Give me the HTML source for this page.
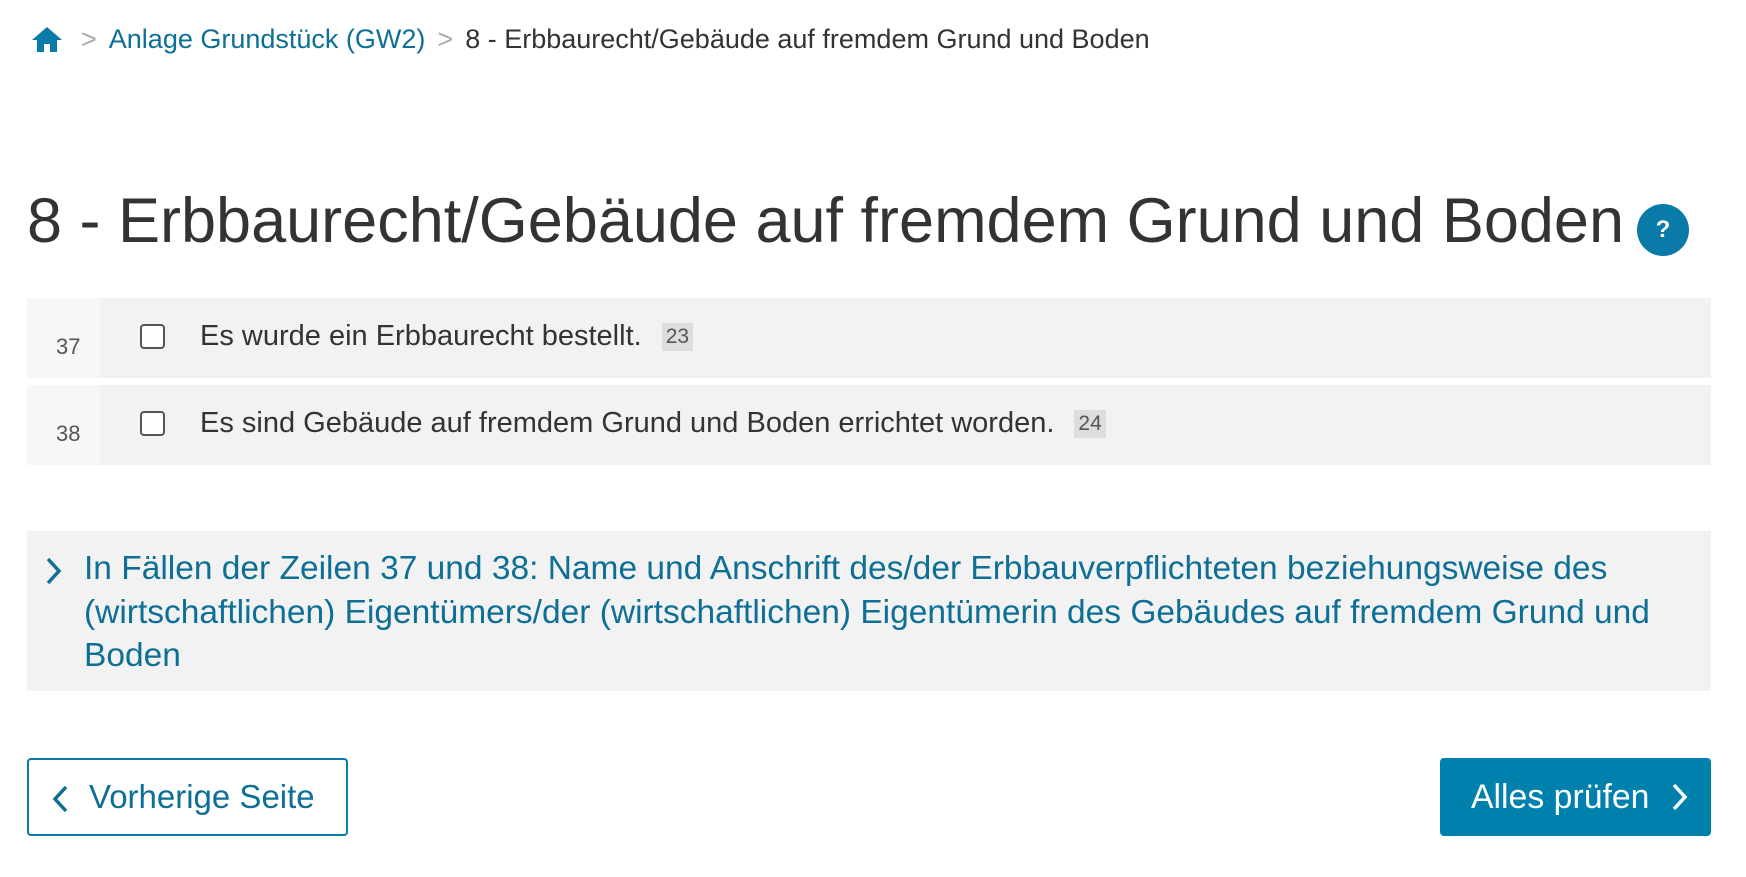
<!DOCTYPE html>
<html><head><meta charset="utf-8"><style>
*{box-sizing:border-box;margin:0;padding:0}
body{width:1746px;height:877px;background:#fff;font-family:"Liberation Sans",sans-serif;color:#333;position:relative;overflow:hidden}
.abs{position:absolute}
.bc{top:23px;left:0;height:32px;font-size:27px;display:flex;align-items:center}
.bc a{color:#0e6f96;text-decoration:none}
.chev{color:#aaa;margin:0 12px}
h1{position:absolute;left:27px;top:185px;font-size:63px;font-weight:normal;color:#333;white-space:nowrap}
.help{left:1637px;top:204px;width:52px;height:52px;border-radius:50%;background:#0a7aa8;color:#fff;font-weight:bold;font-size:24px;text-align:center;line-height:52px}
.row{left:27px;width:1684px;background:#f2f2f2;height:80px}
.num{position:absolute;left:0;top:0;width:73px;height:100%;background:#f7f7f7;font-size:22px;color:#555;padding-left:29px;padding-top:36px}
.cb{position:absolute;left:113px;top:26px;width:25px;height:25px;border:2px solid #555;border-radius:4px;background:#fff}
.lbl{position:absolute;left:173px;top:22px;font-size:29px;color:#333;white-space:nowrap}
.badge{display:inline-block;background:#ddd;font-size:21px;color:#555;padding:2px 4px;margin-left:20px;vertical-align:middle}
.acc{left:27px;top:531px;width:1684px;height:160px;background:#f2f2f2;color:#0e6f96;font-size:33.5px;line-height:43.6px;padding:16px 40px 0 57px}
.acc svg{position:absolute;left:17px;top:25px}
.btn{top:758px;height:78px;border-radius:4px;font-size:33px;display:flex;align-items:center}
.prev{left:27px;width:321px;border:2px solid #0a7aa8;color:#0e6f96;padding-left:60px}
.next{left:1440px;width:271px;background:#0080ad;color:#fff;padding-left:31px;font-size:33.8px}
</style></head><body>
<div class="abs bc">
<svg style="margin-left:31px" width="32" height="28" viewBox="0 0 32 28"><path d="M16 2 L1 15 H6 V27 H13 V19 H19 V27 H26 V15 H31 Z" fill="#0a7aa8"/></svg>
<span class="chev" style="margin-left:18px">&gt;</span><a>Anlage Grundstück (GW2)</a><span class="chev">&gt;</span><span>8 - Erbbaurecht/Gebäude auf fremdem Grund und Boden</span>
</div>
<h1>8 - Erbbaurecht/Gebäude auf fremdem Grund und Boden</h1>
<div class="abs help">?</div>
<div class="abs row" style="top:298px"><div class="num">37</div><div class="cb"></div><div class="lbl">Es wurde ein Erbbaurecht bestellt.<span class="badge">23</span></div></div>
<div class="abs row" style="top:385px"><div class="num">38</div><div class="cb"></div><div class="lbl">Es sind Gebäude auf fremdem Grund und Boden errichtet worden.<span class="badge">24</span></div></div>
<div class="abs acc"><svg width="20" height="30" viewBox="0 0 20 30"><path d="M4 3 L15 15 L4 27" stroke="#0e6f96" stroke-width="3.5" fill="none"/></svg>In Fällen der Zeilen 37 und 38: Name und Anschrift des/der Erbbauverpflichteten beziehungsweise des (wirtschaftlichen) Eigentümers/der (wirtschaftlichen) Eigentümerin des Gebäudes auf fremdem Grund und Boden</div>
<div class="abs btn prev"><svg class="abs" style="left:22px;top:24px" width="20" height="30" viewBox="0 0 20 30"><path d="M15 3 L4 15 L15 27" stroke="#0e6f96" stroke-width="3.5" fill="none"/></svg>Vorherige Seite</div>
<div class="abs btn next">Alles prüfen<svg class="abs" style="right:22px;top:24px" width="20" height="30" viewBox="0 0 20 30"><path d="M5 3 L16 15 L5 27" stroke="#fff" stroke-width="3.5" fill="none"/></svg></div>
</body></html>
